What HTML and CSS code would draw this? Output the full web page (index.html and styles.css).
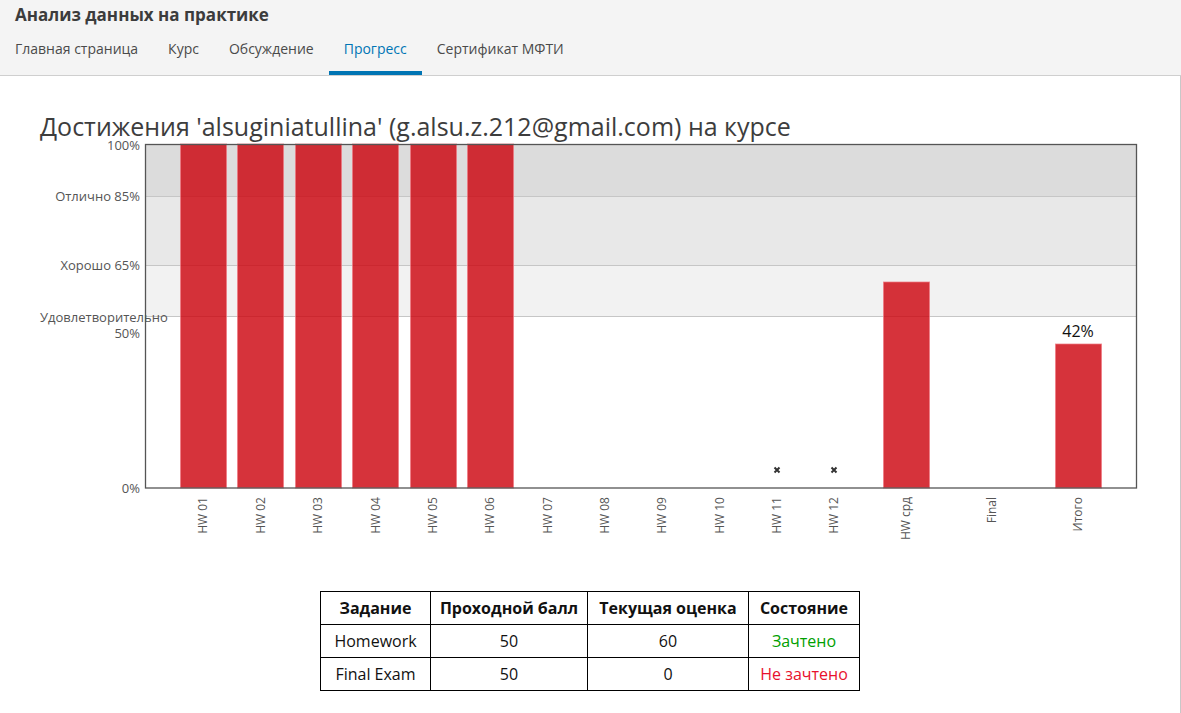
FILE: index.html
```html
<!DOCTYPE html>
<html lang="ru">
<head>
<meta charset="utf-8">
<title>Прогресс</title>
<link rel="stylesheet" href="styles.css">
</head>
<body>
<header class="course-header">
  <div class="course-title">Анализ данных на практике</div>
  <nav class="tabs">
    <a class="tab">Главная страница</a>
    <a class="tab">Курс</a>
    <a class="tab">Обсуждение</a>
    <a class="tab active">Прогресс</a>
    <a class="tab">Сертификат МФТИ</a>
  </nav>
</header>
<main class="content">
  <h1 class="progress-title">Достижения 'alsuginiatullina' (g.alsu.z.212@gmail.com) на курсе</h1>
  <svg class="chart" width="1180" height="420" viewBox="0 141 1180 420" xmlns="http://www.w3.org/2000/svg">
    <!-- grade bands -->
    <rect x="146" y="144" width="991" height="52" fill="#dcdcdc"/>
    <rect x="146" y="196" width="991" height="69" fill="#e8e8e8"/>
    <rect x="146" y="265" width="991" height="51" fill="#f2f2f2"/>
    <line x1="146" y1="196.5" x2="1137" y2="196.5" stroke="#c6c6c6"/>
    <line x1="146" y1="265.5" x2="1137" y2="265.5" stroke="#c6c6c6"/>
    <line x1="146" y1="316.5" x2="1137" y2="316.5" stroke="#c6c6c6"/>
    <!-- bars -->
    <g class="bars">
      <rect x="180.5" y="144" width="46" height="344"/>
      <rect x="237.5" y="144" width="46" height="344"/>
      <rect x="295.5" y="144" width="46" height="344"/>
      <rect x="352.5" y="144" width="46" height="344"/>
      <rect x="410.5" y="144" width="46" height="344"/>
      <rect x="467.5" y="144" width="46" height="344"/>
      <rect x="883.5" y="282" width="46" height="206"/>
      <rect x="1055.5" y="344" width="46" height="144"/>
    </g>
    <!-- dropped markers -->
    <g class="marks">
      <path d="M774.5 467.5 L779.5 472.5 M779.5 467.5 L774.5 472.5"/>
      <path d="M831.5 467.5 L836.5 472.5 M836.5 467.5 L831.5 472.5"/>
    </g>
    <!-- frame -->
    <rect x="145.5" y="144.5" width="991" height="343.5" fill="none" stroke="#555" stroke-width="1.3"/>
    <!-- y labels -->
    <g class="ylab">
      <text x="140" y="150">100%</text>
      <text x="140" y="201">Отлично 85%</text>
      <text x="140" y="270">Хорошо 65%</text>
      <text x="40" y="322" class="start">Удовлетворительно</text>
      <text x="140" y="338">50%</text>
      <text x="140" y="493">0%</text>
    </g>
    <!-- x labels -->
    <g class="xlab">
      <text transform="translate(207 497) rotate(-90)">HW 01</text>
      <text transform="translate(265 497) rotate(-90)">HW 02</text>
      <text transform="translate(322 497) rotate(-90)">HW 03</text>
      <text transform="translate(380 497) rotate(-90)">HW 04</text>
      <text transform="translate(437 497) rotate(-90)">HW 05</text>
      <text transform="translate(494 497) rotate(-90)">HW 06</text>
      <text transform="translate(552 497) rotate(-90)">HW 07</text>
      <text transform="translate(609 497) rotate(-90)">HW 08</text>
      <text transform="translate(666 497) rotate(-90)">HW 09</text>
      <text transform="translate(724 497) rotate(-90)">HW 10</text>
      <text transform="translate(781 497) rotate(-90)">HW 11</text>
      <text transform="translate(838 497) rotate(-90)">HW 12</text>
      <text transform="translate(910 497) rotate(-90)">HW срд</text>
      <text transform="translate(996 497) rotate(-90)">Final</text>
      <text transform="translate(1082 497) rotate(-90)">Итого</text>
    </g>
    <text x="1078" y="337" class="total">42%</text>
  </svg>
  <table class="grades">
    <colgroup>
      <col class="c1"><col class="c2"><col class="c3"><col class="c4">
    </colgroup>
    <thead>
      <tr><th>Задание</th><th>Проходной балл</th><th>Текущая оценка</th><th>Состояние</th></tr>
    </thead>
    <tbody>
      <tr><td>Homework</td><td>50</td><td>60</td><td class="pass">Зачтено</td></tr>
      <tr><td>Final Exam</td><td>50</td><td>0</td><td class="fail">Не зачтено</td></tr>
    </tbody>
  </table>
</main>
</body>
</html>
```

FILE: styles.css
```css
* { box-sizing: border-box; }
html, body {
  margin: 0;
  padding: 0;
  background: #f4f4f4;
  font-family: "Open Sans", "Noto Sans", sans-serif;
}
.course-header {
  background: #f4f4f4;
  border-bottom: 1px solid #cfcfcf;
  height: 76px;
}
.course-title {
  padding: 3px 15px 0;
  font-size: 17px;
  line-height: 24px;
  font-weight: 700;
  color: #3c3c3c;
}
.tabs {
  display: flex;
  margin-top: 5px;
}
.tab {
  display: block;
  padding: 0 15px;
  font-size: 14px;
  line-height: 33px;
  height: 43px;
  color: #4a4a4a;
  border-bottom: 4px solid transparent;
}
.tab.active {
  color: #0075b4;
  border-bottom-color: #0075b4;
}
.content {
  width: 1181px;
  min-height: 637px;
  background: #fff;
  border-right: 1px solid #c8c8c8;
  padding-top: 35px;
}
.progress-title {
  margin: 0 0 0 40px;
  font-size: 25px;
  line-height: 30px;
  font-weight: 400;
  color: #3d3d3d;
  letter-spacing: 0;
}
.chart {
  display: block;
  overflow: visible;
}
.bars rect {
  fill: rgba(204, 0, 10, 0.8);
  stroke: rgba(240, 120, 130, 0.7);
  stroke-width: 1;
}
.marks path {
  stroke: #333;
  stroke-width: 2;
}
.ylab text {
  font-family: "Open Sans", sans-serif;
  font-size: 13px;
  fill: #555;
  text-anchor: end;
}
.ylab text.start {
  text-anchor: start;
}
.xlab text {
  font-family: "Open Sans", sans-serif;
  font-size: 12px;
  fill: #555;
  text-anchor: end;
}
.total {
  font-family: "Open Sans", sans-serif;
  font-size: 16px;
  fill: #111;
  text-anchor: middle;
}
.grades {
  margin: 30px auto 0;
  border-collapse: collapse;
  table-layout: fixed;
  font-size: 16px;
  color: #111;
}
.grades .c1 { width: 110px; }
.grades .c2 { width: 157px; }
.grades .c3 { width: 161px; }
.grades .c4 { width: 111px; }
.grades th, .grades td {
  border: 1px solid #000;
  text-align: center;
  padding: 5px 2px;
  line-height: 22px;
  white-space: nowrap;
}
.grades th {
  font-weight: 700;
}
.grades .pass { color: #00a000; }
.grades .fail { color: #e8112d; }
```
